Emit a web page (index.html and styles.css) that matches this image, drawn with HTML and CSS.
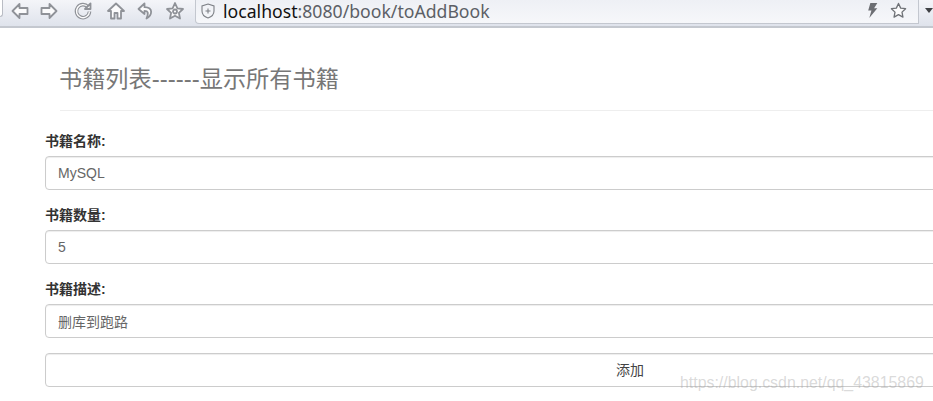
FILE: index.html
```html
<!DOCTYPE html>
<html lang="zh-CN">
<head>
    <meta charset="UTF-8">
    <title>新增书籍</title>
    <link rel="stylesheet" href="styles.css">
</head>
<body>
    <!-- Browser toolbar -->
    <div class="toolbar">
        <div class="tab-edge"></div>
        <div class="nav-icons">
            <svg class="nav-icon" viewBox="0 0 18 18"><path d="M8.500 2 1.500 9 8.500 16V12H16.500V6H8.500Z"/></svg>
            <svg class="nav-icon" viewBox="0 0 18 18"><path d="M9.500 2 16.500 9 9.500 16V12H1.500V6H9.500Z"/></svg>
            <svg class="nav-icon reload" viewBox="0 0 18 18">
                <path class="reload-out" d="M14 5A6.500 6.500 0 1 0 15.500 9.500"/>
                <path class="reload-in" d="M14 5A6.500 6.500 0 1 0 15.500 9.500"/>
                <path d="M16.500 1.500V7H11Z"/>
            </svg>
            <svg class="nav-icon" viewBox="0 0 18 18"><path d="M9 1.500 1 9H4V16.500H7.500V11H10.500V16.500H14V9H17Z"/></svg>
            <svg class="nav-icon undo" viewBox="0 0 18 18"><path d="M7.500 1.500 1.500 7 7.500 12V8.800C10.800 8.800 12 10.500 9.500 16.500 15 13.500 17 5.500 7.500 5.200Z"/></svg>
            <svg class="nav-icon" viewBox="0 0 18 18"><path d="M9 1 11.400 6.300 17 7 12.900 10.800 14 16.500 9 13.700 4 16.500 5.100 10.800 1 7 6.600 6.300Z"/><circle cx="9" cy="9.500" r="2"/></svg>
        </div>
        <div class="url-bar">
            <svg class="shield" viewBox="0 0 14 16"><path d="M7 1 13 3V8C13 11.500 10 14 7 15 4 14 1 11.500 1 8V3Z"/><path d="M7 5.500V10.500M4.500 8H9.500"/></svg>
            <span class="url"><span class="host">localhost</span>:8080/book/toAddBook</span>
            <svg class="bolt" viewBox="0 0 10 14"><path d="M3 0H9.500L6.500 5H9.500L2 14 4 7H1Z"/></svg>
            <svg class="star" viewBox="0 0 18 18"><path d="M9 1.500 11.300 6.500 16.500 7.100 12.700 10.700 13.700 16 9 13.300 4.300 16 5.300 10.700 1.500 7.100 6.700 6.500Z"/></svg>
        </div>
        <div class="menu-arrow"></div>
    </div>

    <div class="container">
        <div class="page-header">
            <h1><span class="cjk">书籍列表</span>------<span class="cjk">显示所有书籍</span></h1>
        </div>
        <form>
            <div class="form-group">
                <label>书籍名称:</label>
                <input class="form-control" type="text" value="MySQL">
            </div>
            <div class="form-group">
                <label>书籍数量:</label>
                <input class="form-control" type="text" value="5">
            </div>
            <div class="form-group">
                <label>书籍描述:</label>
                <input class="form-control" type="text" value="删库到跑路">
            </div>
            <div class="form-group">
                <button class="form-control btn" type="button">添加</button>
            </div>
        </form>
    </div>

    <div class="watermark">https://blog.csdn.net/qq_43815869</div>
</body>
</html>
```
FILE: styles.css
```css
* {
    box-sizing: border-box;
}

html, body {
    height: 100%;
}

body {
    margin: 0;
    position: relative;
    overflow: hidden;
    background: #fff;
    font-family: "Liberation Sans", "Noto Sans CJK SC", sans-serif;
    font-size: 14px;
    line-height: 20px;
    color: #333;
}

/* Browser toolbar */
.toolbar {
    display: flex;
    align-items: stretch;
    height: 28px;
    background: linear-gradient(#f4f5f9, #dfe3ec);
    border-bottom: 2px solid #c4c8cf;
}

.tab-edge {
    width: 3px;
    height: 17px;
    background: #fff;
    border: 1px solid #b9bcc4;
    border-left: 0;
    border-top: 0;
    border-radius: 0 0 3px 0;
}

.nav-icons {
    display: flex;
    align-items: center;
    width: 192px;
    padding: 0 0 4px 8px;
    gap: 11px;
}

.nav-icon {
    width: 18px;
    height: 18px;
    flex: none;
    fill: #fbfbfc;
    stroke: #8f9298;
    stroke-width: 1.800;
    stroke-linejoin: round;
}

.nav-icon.reload {
    margin: 0 4px 0 5px;
}

.nav-icon.undo {
    margin-left: 1px;
}

.reload-out,
.reload-in {
    fill: none;
}

.reload-out {
    stroke-width: 3.600;
}

.reload-in {
    stroke: #fbfbfc;
    stroke-width: 1.400;
}

.url-bar {
    display: flex;
    align-items: center;
    width: 724px;
    height: 24px;
    padding: 0 11px 2px 5px;
    background: linear-gradient(#eef0f5, #f6f7fa);
    border: 1px solid #c3c7cf;
    border-top: 0;
    border-radius: 0 0 0 4px;
}

.shield {
    width: 14px;
    height: 16px;
    flex: none;
    fill: none;
    stroke: #7c7f85;
    stroke-width: 1.100;
}

.url {
    flex: 1;
    margin-left: 8px;
    font-family: "Noto Sans", "Liberation Sans", sans-serif;
    font-size: 17.650px;
    color: #5c5f66;
    white-space: nowrap;
}

.host {
    color: #111;
}

.bolt {
    width: 11px;
    height: 15px;
    margin-right: 12px;
    fill: #6c6e73;
}

.star {
    width: 17px;
    height: 17px;
    fill: #fbfbfc;
    stroke: #6f7277;
    stroke-width: 1.400;
    stroke-linejoin: round;
}

.menu-arrow {
    width: 0;
    height: 0;
    margin: 8px 0 0 6px;
    border-left: 4px solid transparent;
    border-right: 4px solid transparent;
    border-top: 5px solid #3f4145;
}

/* Page */
.container {
    width: 1170px;
    margin-left: 45px;
}

.page-header {
    margin: 0 0 20px 15px;
    padding: 36px 0 16px;
    border-bottom: 1px solid #eee;
}

h1 {
    margin: 0 0 0 -1px;
    font-size: 24px;
    font-weight: 400;
    line-height: 29px;
    color: #777;
}

.cjk {
    font-size: 23.200px;
}

.form-group {
    margin-bottom: 15px;
}

label {
    display: block;
    margin-bottom: 5px;
    font-weight: 700;
}

.form-control {
    display: block;
    width: 100%;
    height: 34px;
    padding: 6px 12px;
    font-family: inherit;
    font-size: 14px;
    line-height: 20px;
    color: #666;
    background: #fff;
    border: 1px solid #ccc;
    border-radius: 4px;
    box-shadow: inset 0 1px 1px rgba(0, 0, 0, 0.075);
}

.btn {
    color: #444;
    text-align: center;
}

.watermark {
    position: absolute;
    top: 373px;
    left: 680px;
    font-size: 15.900px;
    color: rgba(160, 160, 160, 0.4);
    white-space: nowrap;
}
```
